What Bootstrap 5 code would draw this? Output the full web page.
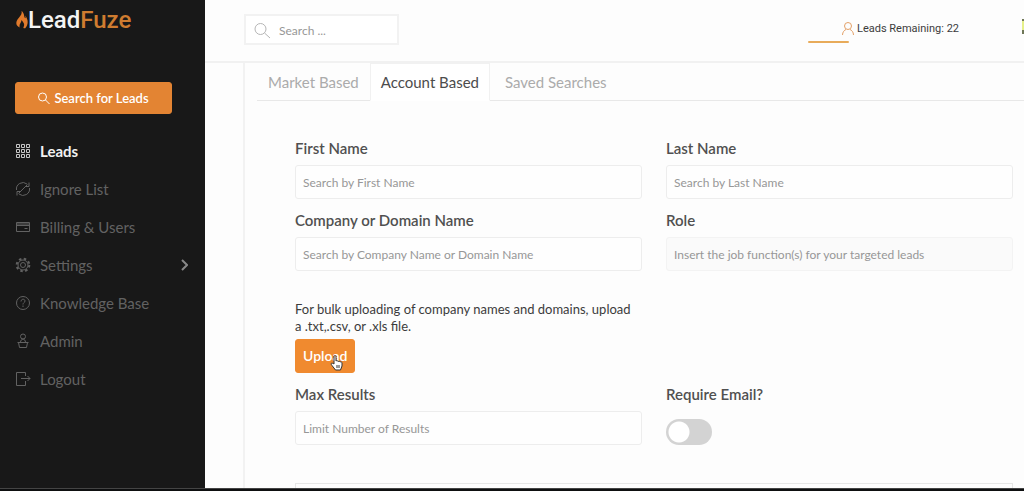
<!DOCTYPE html>
<html lang="en">
<head>
<meta charset="utf-8">
<meta name="viewport" content="width=device-width, initial-scale=1">
<title>LeadFuze</title>
<link href="https://cdn.jsdelivr.net/npm/bootstrap@5.3.0/dist/css/bootstrap.min.css" rel="stylesheet">
<style>
  body { font-family: Lato, "Liberation Sans", sans-serif; font-size: 14px; line-height: 20px; color: #4a4a4a; background: #fdfdfd; overflow-x: hidden; }
  svg { flex: none; fill: none; stroke: currentColor; }
  svg.solid { stroke: none; }

  .side { width: 205px; background: #181818; padding: 6px 17px 0 15px; }
  .brand { font-family: Roboto, "Liberation Sans", sans-serif; font-size: 24px; line-height: 28px; font-weight: 500; color: #f4f4f4; margin-bottom: 48px; padding-left: 1px; }
  .brand b { font-weight: 500; color: #cf7c30; }
  .btn-fuze { --bs-btn-color: #fff; --bs-btn-bg: #e38433; --bs-btn-border-color: #e38433; --bs-btn-hover-color: #fff; --bs-btn-hover-bg: #d67626; --bs-btn-hover-border-color: #d67626; --bs-btn-border-radius: 3px; --bs-btn-font-size: 13px; --bs-btn-padding-y: 5px; --bs-btn-line-height: 20px; --bs-btn-font-weight: 600; }
  .btn-find { width: 157px; margin-bottom: 18px; --bs-btn-padding-x: 4px; }
  .side .nav-link { font-size: 15px; line-height: 22px; padding: 8px 0; color: #626262; }
  .side .nav-link.active { color: #f2f2f2; font-weight: 700; }

  .topbar { height: 63px; padding: 14px 0 0 39px; border-bottom: 2px solid #f1f1f1; }
  .find-box { width: 155px; height: 31px; border: 2px solid #f2f2f2; padding: 2px 8px 0; color: #b5b5b5; background: #fff; }
  .find-box input { font-size: 12px; color: #555; }
  input::placeholder { color: #979797 !important; opacity: 1; }
  .quota { margin-right: 63px; font-family: Roboto, "Liberation Sans", sans-serif; font-size: 11px; color: #3c3c3c; padding-top: 5px; }
  .quota .progress { width: 41px; height: 2px; margin-top: 22px; margin-right: -7px; background: #e8ab5a; border-radius: 1px; }
  .quota svg { color: #e3a067; margin-top: 3px; margin-right: 3px; }
  .face { width: 2px; height: 18px; margin-top: 2px; overflow: hidden; }

  .panel { margin-left: 38px; border-left: 2px solid #f2f2f2; }
  .nav-tabs { --bs-nav-tabs-border-color: #e8e8e8; --bs-nav-tabs-link-active-bg: #fff; --bs-nav-tabs-link-active-color: #4c4c4c; --bs-nav-tabs-link-active-border-color: #f1f1f1 #f1f1f1 #fff; --bs-nav-tabs-border-radius: 0; margin-left: 12px; }
  .nav-tabs .nav-link { font-size: 15px; line-height: 22px; padding: 7px 10px; color: #ababab; }
  .form-zone { padding: 37px 11px 0 50px; }
  .form-label { font-size: 15px; line-height: 20px; font-weight: 600; color: #505050; margin-bottom: 7px; }
  .form-zone .form-control { height: 34px; font-size: 12px; border: 1px solid #ededed; border-radius: 3px; padding: 4px 7px; background: #fefefe; }
  .form-zone .form-control.tinted { background: #fafafa; border-color: #f3f3f3; }
  .form-zone .row { margin-bottom: 11px; }
  .note { font-size: 13px; line-height: 17px; margin: 30px 0 4px; padding-right: 6px; color: #3c3c3c; }
  .btn-upload { --bs-btn-bg: #f08a2f; --bs-btn-border-color: #f08a2f; --bs-btn-padding-y: 6px; --bs-btn-padding-x: 7px; --bs-btn-font-size: 14px; }
  .pointer { left: 34px; top: 15px; }
  .form-switch .form-check-input { width: 46px; height: 26px; margin: 8px 0 0; float: none; display: block; border: 0; background: #d3d3d3 radial-gradient(circle at 13px 13px, #fff 10px, transparent 11px); }
  .form-switch .form-check-input:checked { background: #f08a2f radial-gradient(circle at 33px 13px, #fff 10px, transparent 11px); }
  .next-box { border: 1px solid #e6e6e6; border-bottom: 0; margin-top: 27px; min-height: 4px; }
  .base { height: 3px; background: #0e0f10; border-top: 1px solid #444; }
</style>
</head>
<body class="d-flex flex-column min-vh-100">
<div class="d-flex flex-grow-1">
  <aside class="side flex-shrink-0">
    <div class="brand d-flex align-items-center">
      <svg class="solid" width="12" height="20" viewBox="0 0 13 20" aria-hidden="true"><path fill="#e07a2c" d="M6 0c4 4 2 6 4 8 1-1 0-2 0-3 3 4 4 9 0 14-1 0-2 0-2-1 2-4 0-5-2-8 0 3-3 4-2 8C-1 16 0 12 2 9c2-3 5-5 4-9z"/></svg>
      <span>Lead<b>Fuze</b></span>
    </div>
    <button type="button" class="btn btn-fuze btn-find d-flex align-items-center justify-content-center gap-1">
      <svg width="12" height="13" viewBox="0 0 12 13" aria-hidden="true"><circle cx="4.500" cy="5" r="4"/><path d="M7.500 8l4 4"/></svg>
      Search for Leads
    </button>
    <nav class="nav flex-column">
      <a href="#" class="nav-link active d-flex align-items-center gap-2" aria-current="page">
        <svg width="17" height="16" viewBox="0 0 17 16" aria-hidden="true" opacity=".8"><path d="M1.500 1.500h3v3h-3zM6.500 1.500h3v3h-3zM11.500 1.500h3v3h-3zM1.500 6.500h3v3h-3zM6.500 6.500h3v3h-3zM11.500 6.500h3v3h-3zM1.500 11.500h3v3h-3zM6.500 11.500h3v3h-3zM11.500 11.500h3v3h-3z"/></svg>Leads</a>
      <a href="#" class="nav-link d-flex align-items-center gap-2">
        <svg width="17" height="16" viewBox="0 0 17 16" aria-hidden="true"><path d="M1.500 9a6.500 6.500 0 0 1 10.500-6M4 13a6.500 6.500 0 0 0 10.500-6M3.500 12.500L12.500 3.500M14 1.500v4h-4M2 14.500v-4h4"/></svg>Ignore List</a>
      <a href="#" class="nav-link d-flex align-items-center gap-2">
        <svg width="17" height="16" viewBox="0 0 17 16" aria-hidden="true"><path d="M1.500 3.500h13v9h-13zM1.500 6.500h13M9.500 9.500h3M1.500 5h13"/></svg>Billing &amp; Users</a>
      <a href="#" class="nav-link d-flex align-items-center gap-2">
        <svg width="17" height="16" viewBox="0 0 17 16" aria-hidden="true"><circle cx="8" cy="8" r="2.500"/><circle cx="8" cy="8" r="5"/><circle cx="8" cy="8" r="6.300" stroke-width="2" stroke-dasharray="2.500 2.450"/></svg>Settings
        <svg class="ms-auto" width="7" height="12" viewBox="0 0 7 12" stroke-width="2" aria-hidden="true"><path stroke="#888" d="M1 1l5 5-5 5"/></svg></a>
      <a href="#" class="nav-link d-flex align-items-center gap-2">
        <svg width="17" height="16" viewBox="0 0 17 16" aria-hidden="true"><circle cx="8" cy="8" r="6.500"/><path d="M6 6.500c0-3 4-3 4-.500 0 1.500-2 1.500-2 3.500M8 10.500v1.500"/></svg>Knowledge Base</a>
      <a href="#" class="nav-link d-flex align-items-center gap-2">
        <svg width="17" height="16" viewBox="0 0 17 16" aria-hidden="true"><circle cx="8" cy="3.500" r="2.500"/><path d="M5.500 9.500c0-4.500 5-4.500 5 0M2.500 9.500h11M3.500 9.500l1 5h7l1-5"/></svg>Admin</a>
      <a href="#" class="nav-link d-flex align-items-center gap-2">
        <svg width="17" height="16" viewBox="0 0 17 16" aria-hidden="true"><path d="M10.500 5V1.500h-9v13h9V10M6 7.500h9M12.500 5L15 7.500 12.500 10"/></svg>Logout</a>
    </nav>
  </aside>

  <main class="d-flex flex-column flex-grow-1">
    <header class="topbar d-flex align-items-start">
      <label class="find-box d-flex align-items-center gap-2">
        <svg width="17" height="17" viewBox="0 0 17 17" aria-hidden="true"><circle cx="6.500" cy="7" r="5.500"/><path d="M10.500 11l5.500 5"/></svg>
        <input type="text" class="border-0 bg-transparent p-0 w-100" placeholder="Search ..." aria-label="Search">
      </label>
      <div class="quota ms-auto d-flex">
        <div class="progress" role="progressbar" aria-label="Leads used"></div>
        <svg width="12" height="13" viewBox="0 0 12 13" aria-hidden="true"><circle cx="6" cy="4" r="3.500"/><path d="M.500 13c0-3 2-5 3.500-5.500M11.500 13c0-3-2-5-3.500-5.500"/></svg>
        <span>Leads Remaining: 22</span>
      </div>
      <div class="face"><svg class="solid" width="18" height="18" viewBox="0 0 18 18" aria-hidden="true"><path fill="#6f7757" d="M0 1h18v16H0z"/><path fill="#e6f08a" d="M0 3h18v9H0z"/></svg></div>
    </header>

    <section class="panel d-flex flex-column flex-grow-1">
      <ul class="nav nav-tabs">
        <li class="nav-item"><a href="#" class="nav-link">Market Based</a></li>
        <li class="nav-item"><a href="#" class="nav-link active" aria-current="page">Account Based</a></li>
        <li class="nav-item"><a href="#" class="nav-link ms-1">Saved Searches</a></li>
      </ul>
      <form class="form-zone d-flex flex-column flex-grow-1">
        <div class="row gx-4">
          <div class="col-6">
            <label class="form-label" for="first">First Name</label>
            <input id="first" type="text" class="form-control" placeholder="Search by First Name">
          </div>
          <div class="col-6">
            <label class="form-label" for="last">Last Name</label>
            <input id="last" type="text" class="form-control" placeholder="Search by Last Name">
          </div>
        </div>
        <div class="row gx-4">
          <div class="col-6">
            <label class="form-label" for="company">Company or Domain Name</label>
            <input id="company" type="text" class="form-control" placeholder="Search by Company Name or Domain Name">
            <p class="note">For bulk uploading of company names and domains, upload a .txt,.csv, or .xls file.</p>
            <button type="button" class="btn btn-fuze btn-upload position-relative">Upload
              <svg class="pointer position-absolute" width="14" height="16" viewBox="0 0 14 16" aria-hidden="true"><path fill="#fff" stroke="#333" d="M4 9V2c0-2 2-2 2 0v4c1-1 2 0 2 .500 1-.500 2 0 2 .500 1-.500 2 0 2 1V11l-1.500 4h-5L2 10.500C0 8 2 7.500 4 9zM7 10v3M9 10v3"/></svg>
            </button>
          </div>
          <div class="col-6">
            <label class="form-label" for="role">Role</label>
            <input id="role" type="text" class="form-control tinted" placeholder="Insert the job function(s) for your targeted leads">
          </div>
        </div>
        <div class="row gx-4">
          <div class="col-6">
            <label class="form-label" for="max">Max Results</label>
            <input id="max" type="text" class="form-control" placeholder="Limit Number of Results">
          </div>
          <div class="col-6">
            <div class="form-switch p-0">
              <label class="form-label" for="email">Require Email?</label>
              <input id="email" type="checkbox" role="switch" class="form-check-input">
            </div>
          </div>
        </div>
        <div class="next-box flex-grow-1"></div>
      </form>
    </section>
  </main>
</div>
<footer class="base"></footer>
<script src="https://cdn.jsdelivr.net/npm/bootstrap@5.3.0/dist/js/bootstrap.bundle.min.js"></script>
</body>
</html>
